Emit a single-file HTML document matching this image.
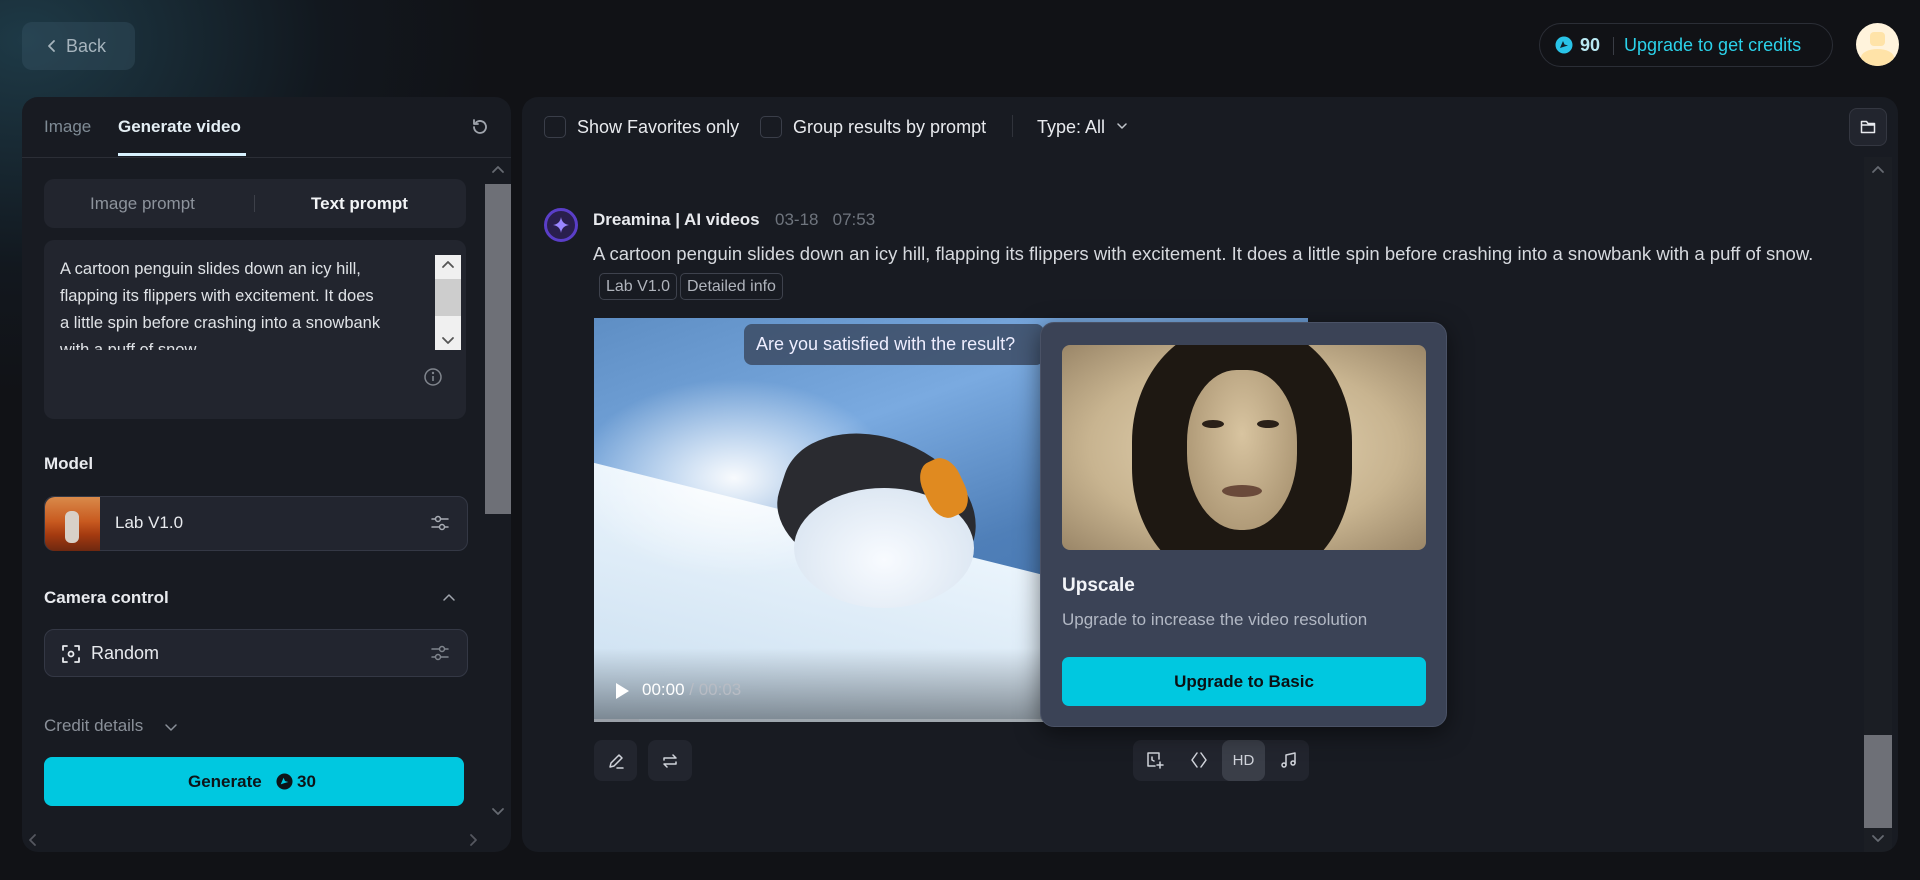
<!DOCTYPE html>
<html><head><meta charset="utf-8"><style>
*{box-sizing:border-box;margin:0;padding:0}
html,body{width:1920px;height:880px;overflow:hidden}
body{background:#111216;font-family:"Liberation Sans",sans-serif;color:#e8eaee;position:relative}
.a{position:absolute}
.glow{left:0;top:0;width:500px;height:400px;background:radial-gradient(ellipse at 5% 10%,rgba(40,90,110,.55),rgba(20,40,55,.25) 45%,rgba(17,18,22,0) 70%)}
.panel{background:#181b22;border-radius:16px}
.ic{stroke:currentColor;fill:none;stroke-width:1.8;stroke-linecap:round;stroke-linejoin:round}
.box{background:#22252f;border:1px solid #343845;border-radius:10px}
.cb{width:22px;height:22px;border:1px solid #3a3e49;border-radius:5px}
.btn{background:#22252e;border-radius:8px;color:#d0d3da;display:flex;align-items:center;justify-content:center}
.tag{border:1px solid #3e424d;border-radius:5px;color:#b0b4bc;font-size:16px;height:27px;line-height:25px;padding:0 6px}
</style></head><body>
<div class="a glow"></div>

<div class="a" style="left:22px;top:22px;width:113px;height:48px;background:rgba(60,90,105,.35);border-radius:10px;color:#a6b4bd;font-size:18px;line-height:48px;padding-left:24px">
<svg class="a ic" style="left:25px;top:17px" width="10" height="14" viewBox="0 0 10 14"><path d="M7 2L2 7l5 5"/></svg><span style="margin-left:20px">Back</span></div>

<div class="a" style="left:1539px;top:23px;width:294px;height:44px;border:1px solid #2b2e36;border-radius:22px;font-size:18px;line-height:42px">
<svg class="a" style="left:15px;top:12px" width="18" height="18" viewBox="0 0 18 18"><circle cx="9" cy="9" r="8.5" fill="#29c4e8"/><path d="M5 12l3-7 1.5 3.5L13 9.5 8 11z" fill="#10222b"/></svg>
<span class="a" style="left:40px;color:#b8e8f2;font-weight:600">90</span>
<span class="a" style="left:73px;top:13px;width:1px;height:18px;background:#3a3d45"></span>
<span class="a" style="left:84px;color:#2bd2ea">Upgrade to get credits</span></div>
<div class="a" style="left:1856px;top:23px;width:43px;height:43px;border-radius:50%;background:#fff3dc;overflow:hidden">
<div class="a" style="left:14px;top:9px;width:15px;height:14px;background:#ffe3a8;border-radius:4px"></div>
<div class="a" style="left:5px;top:26px;width:33px;height:17px;background:#ffe3a8;border-radius:50% 50% 0 0"></div></div>

<!-- left panel -->
<div class="a panel" style="left:22px;top:97px;width:489px;height:755px;overflow:hidden">
<div class="a" style="left:22px;top:20px;font-size:17px;color:#7f8b95">Image</div>
<div class="a" style="left:96px;top:20px;font-size:17px;font-weight:600;color:#e4eef4">Generate video</div>
<div class="a" style="left:96px;top:56px;width:128px;height:3px;background:#d8f2ff"></div>
<svg class="a ic" style="left:448px;top:20px;color:#a0a5ad" width="20" height="20" viewBox="0 0 20 20"><path d="M4 10a6 6 0 1 0 2-4.5"/><path d="M4 3v4h4"/></svg>
<div class="a" style="left:0;top:60px;width:489px;height:1px;background:#2b2e36"></div>
<div class="a" style="left:463px;top:87px;width:26px;height:330px;background:#6e7077"></div>
<div class="a" style="left:463px;top:61px;width:26px;height:26px;background:#181b22"></div>
<svg class="a ic" style="left:469px;top:67px;color:#666a72" width="14" height="10" viewBox="0 0 14 10"><path d="M2 8l5-5 5 5"/></svg>
<svg class="a ic" style="left:469px;top:710px;color:#666a72" width="14" height="10" viewBox="0 0 14 10"><path d="M2 2l5 5 5-5"/></svg>
<svg class="a ic" style="left:6px;top:736px;color:#555860" width="10" height="14" viewBox="0 0 10 14"><path d="M7 2L2 7l5 5"/></svg>
<svg class="a ic" style="left:446px;top:736px;color:#555860" width="10" height="14" viewBox="0 0 10 14"><path d="M3 2l5 5-5 5"/></svg>

<div class="a" style="left:22px;top:82px;width:422px;height:49px;background:#22252e;border-radius:10px;font-size:17px;line-height:49px">
<span class="a" style="left:46px;color:#8d939c">Image prompt</span>
<span class="a" style="left:210px;top:16px;width:1px;height:17px;background:#3d4049"></span>
<span class="a" style="left:267px;color:#f2f4f6;font-weight:600">Text prompt</span></div>

<div class="a" style="left:22px;top:143px;width:422px;height:179px;background:#22252e;border-radius:10px;overflow:hidden">
<div class="a" style="left:16px;top:16px;width:324px;height:94px;overflow:hidden;font-size:16.5px;line-height:27px;color:#dfe2e6">A cartoon penguin slides down an icy hill, flapping its flippers with excitement. It does a little spin before crashing into a snowbank with a puff of snow.</div>
<div class="a" style="left:391px;top:15px;width:26px;height:95px;background:#f0f0f0"></div>
<div class="a" style="left:391px;top:39px;width:26px;height:37px;background:#cdcdcd"></div>
<svg class="a ic" style="left:397px;top:19px;color:#555" width="14" height="10" viewBox="0 0 14 10"><path d="M2 8l5-5 5 5"/></svg>
<svg class="a ic" style="left:397px;top:96px;color:#555" width="14" height="10" viewBox="0 0 14 10"><path d="M2 2l5 5 5-5"/></svg>
<svg class="a" style="left:379px;top:127px" width="20" height="20" viewBox="0 0 20 20"><circle cx="10" cy="10" r="8" fill="none" stroke="#80858d" stroke-width="1.5"/><circle cx="10" cy="6" r="1.2" fill="#80858d"/><path d="M10 9v5" stroke="#80858d" stroke-width="1.6"/></svg></div>

<div class="a" style="left:22px;top:357px;font-size:17px;font-weight:600">Model</div>
<div class="a box" style="left:22px;top:399px;width:424px;height:55px">
<div class="a" style="left:0;top:0;width:55px;height:54px;border-radius:10px 0 0 10px;background:linear-gradient(180deg,#d98a4a 0%,#c85a20 45%,#a43a10 70%,#6e2810 100%)"></div>
<div class="a" style="left:20px;top:14px;width:14px;height:32px;background:#d8d0c8;border-radius:6px"></div>
<span class="a" style="left:70px;top:16px;font-size:17px;color:#e8eaee">Lab V1.0</span>
<svg class="a ic" style="left:385px;top:16px;color:#a9adb5;stroke-width:1.5" width="20" height="20" viewBox="0 0 20 20"><path d="M2 6h16M2 14h16"/><circle cx="8" cy="6" r="2.5" fill="#22252f"/><circle cx="12" cy="14" r="2.5" fill="#22252f"/></svg></div>

<div class="a" style="left:22px;top:491px;font-size:17px;font-weight:600">Camera control</div>
<svg class="a ic" style="left:420px;top:496px;color:#a0a5ad;stroke-width:1.5" width="14" height="10" viewBox="0 0 14 10"><path d="M2 7l5-5 5 5"/></svg>
<div class="a box" style="left:22px;top:532px;width:424px;height:48px">
<svg class="a ic" style="left:16px;top:14px;color:#e8eaee" width="20" height="20" viewBox="0 0 20 20"><path d="M2 6V2h4M14 2h4v4M18 14v4h-4M6 18H2v-4"/><circle cx="10" cy="10" r="2.5"/></svg>
<span class="a" style="left:46px;top:13px;font-size:18px">Random</span>
<svg class="a ic" style="left:385px;top:13px;color:#80858d;stroke-width:1.5" width="20" height="20" viewBox="0 0 20 20"><path d="M2 6h16M2 14h16"/><circle cx="12" cy="6" r="2.5" fill="#22252f"/><circle cx="8" cy="14" r="2.5" fill="#22252f"/></svg></div>

<div class="a" style="left:22px;top:619px;font-size:17px;color:#8a9099">Credit details</div>
<svg class="a ic" style="left:142px;top:625px;color:#8a9099;stroke-width:1.5" width="14" height="10" viewBox="0 0 14 10"><path d="M2 3l5 5 5-5"/></svg>
<div class="a" style="left:22px;top:660px;width:420px;height:49px;background:#00c8e0;border-radius:8px;color:#0d1418;font-size:17px;font-weight:600;line-height:49px">
<span class="a" style="left:144px">Generate</span>
<svg class="a" style="left:232px;top:16px" width="17" height="17" viewBox="0 0 18 18"><circle cx="9" cy="9" r="8.5" fill="#0d1418"/><path d="M5 12l3-7 1.5 3.5L13 9.5 8 11z" fill="#00c8e0"/></svg>
<span class="a" style="left:253px">30</span></div>
</div>

<!-- right panel -->
<div class="a panel" style="left:522px;top:97px;width:1376px;height:755px;overflow:hidden">
<div class="a cb" style="left:22px;top:19px"></div>
<span class="a" style="left:55px;top:20px;font-size:18px">Show Favorites only</span>
<div class="a cb" style="left:238px;top:19px"></div>
<span class="a" style="left:271px;top:20px;font-size:18px">Group results by prompt</span>
<span class="a" style="left:490px;top:18px;width:1px;height:22px;background:#30333b"></span>
<span class="a" style="left:515px;top:20px;font-size:18px">Type: All</span>
<svg class="a ic" style="left:594px;top:25px;color:#c0c4ca;stroke-width:1.5" width="12" height="9" viewBox="0 0 12 9"><path d="M2 2l4 4 4-4"/></svg>
<div class="a" style="left:1327px;top:11px;width:38px;height:38px;background:#22252e;border:1px solid #343741;border-radius:8px"></div>
<svg class="a ic" style="left:1338px;top:22px;color:#e8eaee;stroke-width:1.5" width="16" height="15" viewBox="0 0 16 15"><path d="M1.5 2.5h5l1.5 2h6.5v9h-13z M1.5 6h13"/></svg>
<div class="a" style="left:1342px;top:60px;width:28px;height:695px;background:#1b1e24"></div>
<div class="a" style="left:1342px;top:638px;width:28px;height:93px;background:#6e7077"></div>
<svg class="a ic" style="left:1349px;top:67px;color:#666a72" width="14" height="10" viewBox="0 0 14 10"><path d="M2 8l5-5 5 5"/></svg>
<svg class="a ic" style="left:1349px;top:737px;color:#666a72" width="14" height="10" viewBox="0 0 14 10"><path d="M2 2l5 5 5-5"/></svg>

<div class="a" style="left:22px;top:111px;width:34px;height:34px;border-radius:50%;background:#2a1f4d;border:3px solid #5a3ec8"></div>
<svg class="a" style="left:30px;top:119px" width="18" height="18" viewBox="0 0 18 18"><path d="M9 1Q10 8 17 9Q10 10 9 17Q8 10 1 9Q8 8 9 1z" fill="#9a86ff"/></svg>
<span class="a" style="left:71px;top:113px;font-size:17px;font-weight:600">Dreamina | AI videos</span>
<span class="a" style="left:253px;top:113px;font-size:17px;color:#6f757e">03-18&nbsp;&nbsp;&nbsp;07:53</span>
<div class="a" style="left:71px;top:146px;font-size:18.5px;color:#d6d9de;white-space:nowrap">A cartoon penguin slides down an icy hill, flapping its flippers with excitement. It does a little spin before crashing into a snowbank with a puff of snow.</div>
<div class="a tag" style="left:77px;top:176px">Lab V1.0</div>
<div class="a tag" style="left:158px;top:176px">Detailed info</div>

<!-- video -->
<div class="a" style="left:72px;top:221px;width:714px;height:404px;overflow:hidden;background:linear-gradient(160deg,#5e8ec4 0%,#7aaae0 30%,#4f7fb8 55%,#3a6aa8 100%)">
<div class="a" style="left:-100px;top:120px;width:1000px;height:500px;background:linear-gradient(180deg,#eaf4fc,#cfe2f2 40%,#a9c6e2);transform:rotate(14deg);transform-origin:0 0"></div>
<div class="a" style="left:-20px;top:60px;width:320px;height:200px;background:radial-gradient(ellipse,rgba(255,255,255,.95),rgba(255,255,255,0) 70%)"></div>
<div class="a" style="left:480px;top:70px;width:60px;height:190px;background:linear-gradient(180deg,#cfdbe8,#8ca4be);clip-path:polygon(50% 0,100% 100%,0 100%)"></div>
<div class="a" style="left:185px;top:120px;width:200px;height:140px;background:#2a2b30;border-radius:55% 60% 40% 45%;transform:rotate(18deg)"></div>
<div class="a" style="left:200px;top:170px;width:180px;height:120px;background:radial-gradient(ellipse at 50% 60%,#f8fbff,#d3e0ee);border-radius:50%"></div>
<div class="a" style="left:330px;top:140px;width:40px;height:60px;background:#e08a20;border-radius:40%;transform:rotate(-25deg)"></div>
<div class="a" style="left:0;top:330px;width:714px;height:74px;background:linear-gradient(180deg,rgba(0,0,0,0),rgba(0,0,0,.4))"></div>
<svg class="a" style="left:20px;top:364px" width="16" height="18" viewBox="0 0 16 18"><path d="M2 1l13 8-13 8z" fill="#fff"/></svg>
<span class="a" style="left:48px;top:362px;font-size:17px;color:#fff">00:00 <span style="color:#b8bcc4">/ 00:03</span></span>
<div class="a" style="left:0;top:401px;width:714px;height:3px;background:rgba(255,255,255,.25)"></div>
<div class="a" style="left:0;top:401px;width:45px;height:3px;background:#9aa0a8"></div>
</div>
<div class="a" style="left:222px;top:227px;width:300px;height:41px;background:rgba(60,75,100,.85);border-radius:8px;font-size:18px;line-height:41px;padding-left:12px;color:#eef">Are you satisfied with the result?</div>

<div class="a btn" style="left:72px;top:643px;width:43px;height:41px"><svg class="ic" width="20" height="20" viewBox="0 0 20 20" style="stroke-width:1.5"><path d="M4 16l1-4 8-8 3 3-8 8zM11 17h6"/></svg></div>
<div class="a btn" style="left:126px;top:643px;width:44px;height:41px"><svg class="ic" width="20" height="20" viewBox="0 0 20 20" style="stroke-width:1.5"><path d="M4 9V7h12l-3-3M16 11v2H4l3 3"/></svg></div>
<div class="a btn" style="left:611px;top:643px;width:176px;height:41px;justify-content:flex-start">
<svg class="a ic" style="left:12px;top:10px;stroke-width:1.5" width="20" height="20" viewBox="0 0 20 20"><path d="M14 9V3H3v13h7M15 12v6M12 15h6M7 7v3l2 1"/></svg>
<svg class="a ic" style="left:56px;top:10px;stroke-width:1.5" width="20" height="20" viewBox="0 0 20 20"><path d="M8 3L3 10l5 7M12 3l5 7-5 7"/></svg>
<div class="a" style="left:89px;top:0;width:43px;height:41px;background:#3a3e48;border-radius:8px;font-size:15px;line-height:41px;text-align:center">HD</div>
<svg class="a ic" style="left:146px;top:10px;stroke-width:1.5" width="20" height="20" viewBox="0 0 20 20"><path d="M7 15V5l9-2v10"/><circle cx="5" cy="15" r="2"/><circle cx="14" cy="13" r="2"/></svg></div>
</div>

<!-- popup -->
<div class="a" style="left:1040px;top:322px;width:407px;height:405px;background:#3b4356;border:1px solid #4a5266;border-radius:14px;box-shadow:0 6px 24px rgba(0,0,0,.5)">
<div class="a" style="left:21px;top:22px;width:364px;height:205px;border-radius:8px;overflow:hidden;background:radial-gradient(ellipse at 50% 50%,#e8d8b8,#c8b490 60%,#9a8668)">
<div class="a" style="left:70px;top:-20px;width:220px;height:260px;background:#1e1812;border-radius:45%"></div>
<div class="a" style="left:125px;top:25px;width:110px;height:160px;background:radial-gradient(ellipse at 50% 40%,#d8c4a0,#a08a68);border-radius:45% 45% 48% 48%"></div>
<div class="a" style="left:140px;top:75px;width:22px;height:8px;background:#2a2018;border-radius:50%"></div>
<div class="a" style="left:195px;top:75px;width:22px;height:8px;background:#2a2018;border-radius:50%"></div>
<div class="a" style="left:160px;top:140px;width:40px;height:12px;background:#6a4a3a;border-radius:50%"></div></div>
<div class="a" style="left:21px;top:252px;font-size:19px;font-weight:600;color:#f2f4f8">Upscale</div>
<div class="a" style="left:21px;top:287px;font-size:17px;color:#b2b8c4">Upgrade to increase the video resolution</div>
<div class="a" style="left:21px;top:334px;width:364px;height:49px;background:#00c8e0;border-radius:7px;color:#0b1014;font-size:17px;font-weight:600;line-height:49px;text-align:center">Upgrade to Basic</div>
</div>
</body></html>
